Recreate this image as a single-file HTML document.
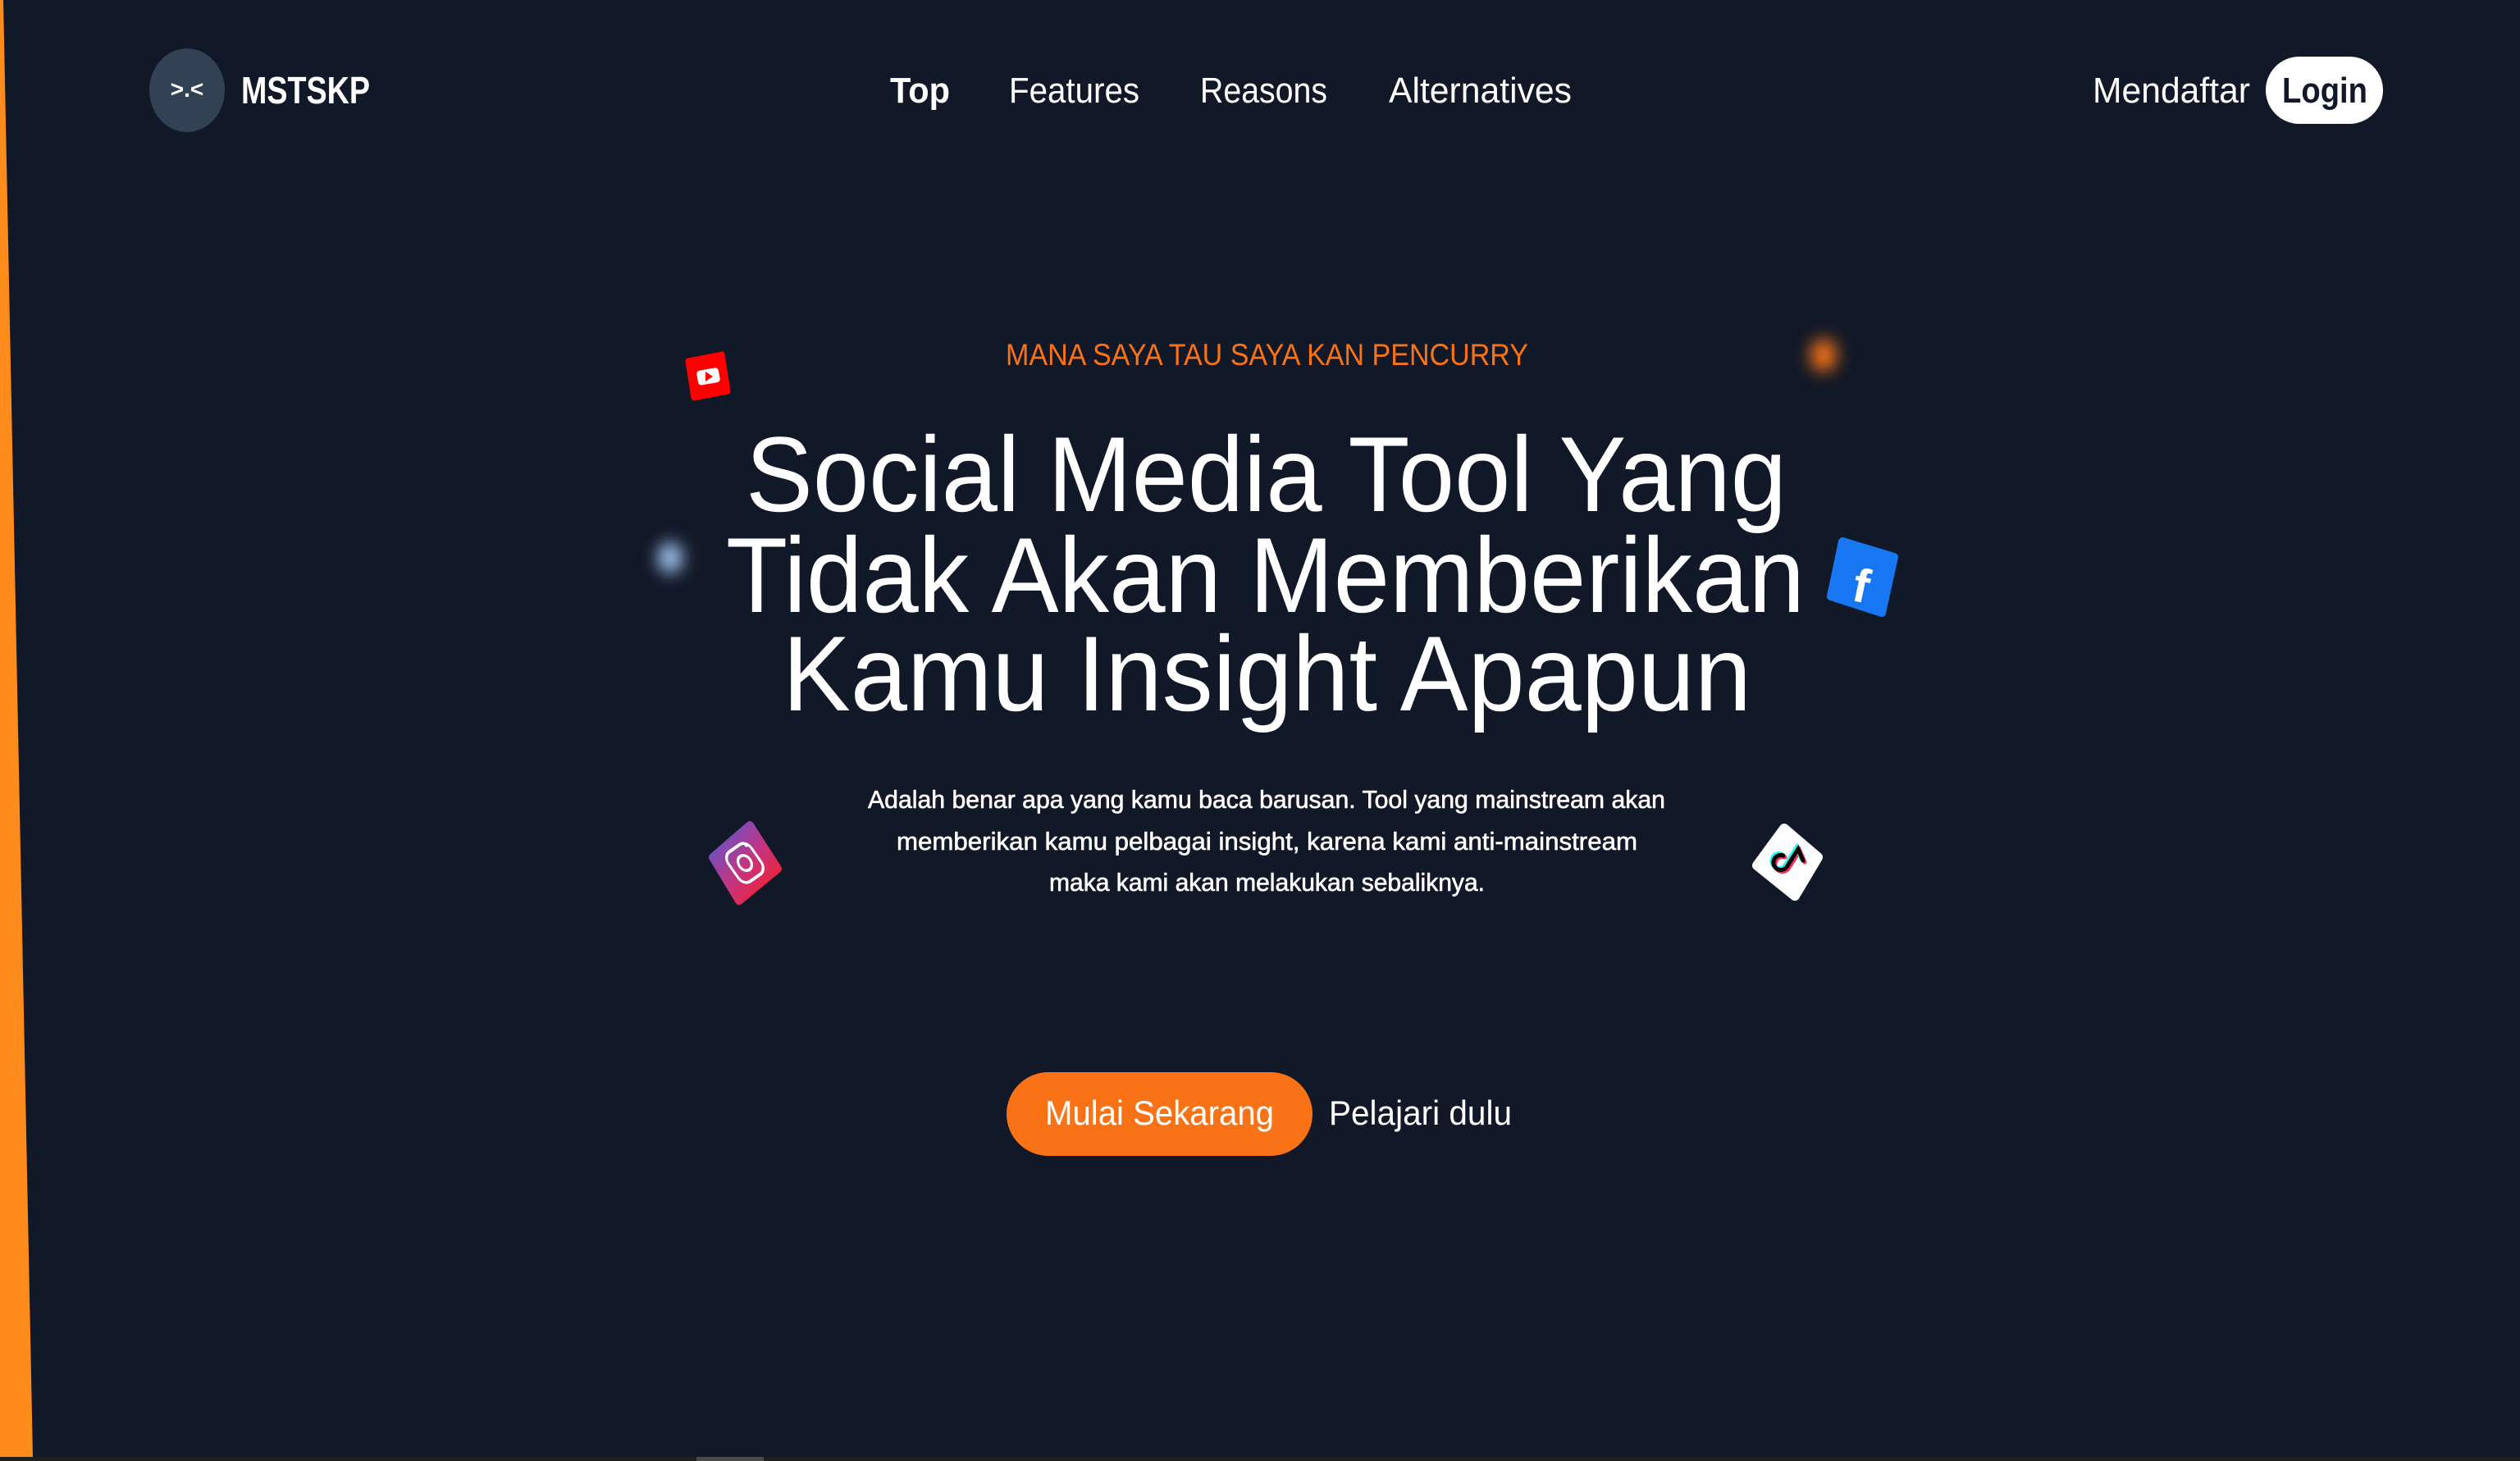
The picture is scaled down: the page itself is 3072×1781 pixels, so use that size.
<!DOCTYPE html>
<html><head><meta charset="utf-8"><style>html,body{margin:0;padding:0;background:#111827;overflow:hidden}svg{display:block}</style></head>
<body>
<svg width="3072" height="1781" viewBox="0 0 3072 1781" xmlns="http://www.w3.org/2000/svg" font-family="'Liberation Sans', sans-serif">
<defs>
<filter id="b1" x="-2" y="-2" width="5" height="5"><feGaussianBlur stdDeviation="10"/></filter>
<linearGradient id="ig" x1="0" y1="0" x2="1" y2="1"><stop offset="0" stop-color="#4f5bd5"/><stop offset="0.5" stop-color="#c13584"/><stop offset="1" stop-color="#fd1d1d"/></linearGradient>
</defs>
<rect width="3072" height="1781" fill="#111827"/>
<polygon points="0,0 4,0 40,1776 0,1776" fill="#fe8c1c"/>
<rect x="0" y="1776" width="3072" height="5" fill="#1e1e1e"/>
<rect x="849" y="1776" width="82" height="5" fill="#4a4a4a"/>

<!-- logo -->
<ellipse cx="228" cy="110" rx="46" ry="51" fill="#334155"/>
<text x="228" y="118" font-size="28" font-weight="bold" fill="#fff" text-anchor="middle">&gt;.&lt;</text>
<text x="294" y="126" font-size="46" font-weight="bold" fill="#fff" textLength="157" lengthAdjust="spacingAndGlyphs">MSTSKP</text>

<!-- nav -->
<g font-size="44" fill="#fff">
<text x="1085" y="125" font-weight="bold" textLength="73" lengthAdjust="spacingAndGlyphs">Top</text>
<text x="1230" y="125" textLength="159" lengthAdjust="spacingAndGlyphs">Features</text>
<text x="1463" y="125" textLength="155" lengthAdjust="spacingAndGlyphs">Reasons</text>
<text x="1693" y="125" textLength="223" lengthAdjust="spacingAndGlyphs">Alternatives</text>
<text x="2551" y="125" textLength="192" lengthAdjust="spacingAndGlyphs">Mendaftar</text>
</g>
<rect x="2762" y="69" width="143" height="82" rx="41" fill="#fff"/>
<text x="2782" y="125" font-size="44" fill="#111827" font-weight="bold" textLength="104" lengthAdjust="spacingAndGlyphs">Login</text>

<!-- subtitle -->
<text x="1226" y="445" font-size="37" fill="#f97316" textLength="637" lengthAdjust="spacingAndGlyphs">MANA SAYA TAU SAYA KAN PENCURRY</text>

<!-- heading -->
<g font-size="130" fill="#fff">
<text x="909" y="623" textLength="1269" lengthAdjust="spacingAndGlyphs">Social Media Tool Yang</text>
<text x="885" y="746" textLength="1315" lengthAdjust="spacingAndGlyphs">Tidak Akan Memberikan</text>
<text x="954" y="866" textLength="1181" lengthAdjust="spacingAndGlyphs">Kamu Insight Apapun</text>
</g>

<!-- paragraph -->
<g font-size="31" fill="#fff" stroke="#fff" stroke-width="0.6">
<text x="1058" y="985" textLength="972" lengthAdjust="spacingAndGlyphs">Adalah benar apa yang kamu baca barusan. Tool yang mainstream akan</text>
<text x="1093" y="1036" textLength="903" lengthAdjust="spacingAndGlyphs">memberikan kamu pelbagai insight, karena kami anti-mainstream</text>
<text x="1279" y="1086" textLength="531" lengthAdjust="spacingAndGlyphs">maka kami akan melakukan sebaliknya.</text>
</g>

<!-- buttons -->
<rect x="1227" y="1307" width="373" height="102" rx="51" fill="#f97316"/>
<text x="1274" y="1371" font-size="42" fill="#fff" textLength="279" lengthAdjust="spacingAndGlyphs">Mulai Sekarang</text>
<text x="1620" y="1371" font-size="42" fill="#fff" textLength="223" lengthAdjust="spacingAndGlyphs">Pelajari dulu</text>

<!-- blurred dots -->
<ellipse cx="2223" cy="433" rx="16" ry="20" fill="#f97316" filter="url(#b1)"/>
<ellipse cx="817" cy="680" rx="15" ry="19" fill="#a5c8f5" filter="url(#b1)"/>

<!-- youtube -->
<polygon points="839,440 880,432 887,477 846,485" fill="#ff0000" stroke="#ff0000" stroke-width="7" stroke-linejoin="round"/>
<rect x="850" y="450" width="27" height="18" rx="4" fill="#fff" transform="rotate(-10 863 459)"/>
<polygon points="860,453 869,459 860,465" fill="#ff0000"/>

<!-- facebook -->
<polygon points="2246,660 2309,679 2294,747 2232,727" fill="#1877f2" stroke="#1877f2" stroke-width="10" stroke-linejoin="round"/>
<text x="2270" y="734" font-size="58" font-weight="bold" fill="#fff" text-anchor="middle" transform="rotate(12 2270 710)">f</text>

<!-- instagram -->
<polygon points="914,1006 948,1059 901,1098 869,1045" fill="url(#ig)" stroke="url(#ig)" stroke-width="10" stroke-linejoin="round"/>
<g transform="translate(908 1052) rotate(-35) scale(0.85 1.1) translate(-908 -1052)" fill="none" stroke="#fff" stroke-width="3.5">
<rect x="888" y="1032" width="40" height="40" rx="11"/>
<circle cx="908" cy="1052" r="9"/>
</g>
<circle cx="910" cy="1030" r="2.5" fill="#fff"/>

<!-- tiktok -->
<polygon points="2175,1010 2216,1045 2188,1092 2142,1055" fill="#fff" stroke="#fff" stroke-width="12" stroke-linejoin="round"/>
<g fill="none" stroke-width="5" stroke-linecap="round">
<path d="M2174,1043 a9,9 0 1 0 4,14 l14,-22 l6,14" stroke="#fe2c55" transform="translate(2,2)"/>
<path d="M2174,1043 a9,9 0 1 0 4,14 l14,-22 l6,14" stroke="#25f4ee" transform="translate(-2,-2)"/>
<path d="M2174,1043 a9,9 0 1 0 4,14 l14,-22 l6,14" stroke="#000"/>
</g>
</svg>
</body></html>
